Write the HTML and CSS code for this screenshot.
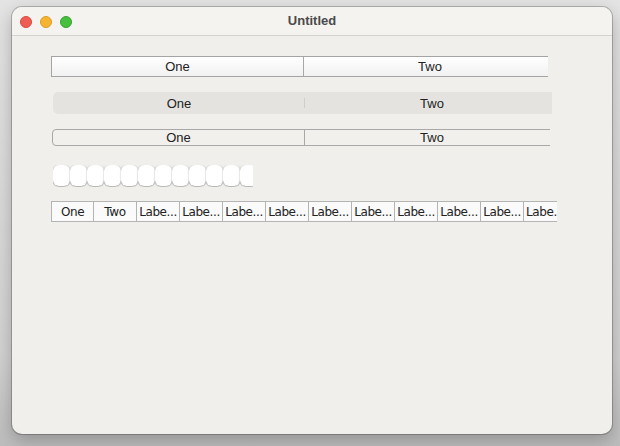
FILE: index.html
```html
<!DOCTYPE html>
<html>
<head>
<meta charset="utf-8">
<link rel="stylesheet" href="styles.css">
</head>
<body>
<div class="window">
  <div class="titlebar">
    <div class="lights">
      <span class="light red"></span>
      <span class="light yellow"></span>
      <span class="light green"></span>
    </div>
    <div class="title">Untitled</div>
  </div>
  <div class="content">
    <div class="clip clip1">
      <div class="seg seg1">
        <div class="cell">One</div>
        <div class="cell">Two</div>
      </div>
    </div>
    <div class="clip clip2">
      <div class="seg seg2">
        <div class="cell">One</div>
        <div class="cell">Two</div>
      </div>
    </div>
    <div class="clip clip3">
      <div class="seg seg3">
        <div class="cell">One</div>
        <div class="cell">Two</div>
      </div>
    </div>
    <div class="pills">
      <span class="pill"></span><span class="pill"></span><span class="pill"></span><span class="pill"></span>
      <span class="pill"></span><span class="pill"></span><span class="pill"></span><span class="pill"></span>
      <span class="pill"></span><span class="pill"></span><span class="pill"></span><span class="pill"></span>
    </div>
    <div class="tabs">
      <div class="tab">One</div>
      <div class="tab">Two</div>
      <div class="tab">Labe...</div>
      <div class="tab">Labe...</div>
      <div class="tab">Labe...</div>
      <div class="tab">Labe...</div>
      <div class="tab">Labe...</div>
      <div class="tab">Labe...</div>
      <div class="tab">Labe...</div>
      <div class="tab">Labe...</div>
      <div class="tab">Labe...</div>
      <div class="tab last">Labe.</div>
    </div>
  </div>
</div>
</body>
</html>
```

FILE: styles.css
```css
html, body {
  margin: 0;
  padding: 0;
}
body {
  width: 620px;
  height: 446px;
  overflow: hidden;
  background: linear-gradient(#e4e4e4, #d2d2d2 80%, #bdbdbd);
  font-family: "Liberation Sans", Arial, sans-serif;
  color: #222;
}
.window {
  margin: 7px 0 0 12px;
  width: 600px;
  height: 427px;
  border-radius: 10px;
  background: #f0efeb;
  box-shadow: 0 0 0 1px rgba(0,0,0,0.22), 0 6px 18px rgba(0,0,0,0.25);
  overflow: hidden;
}
.titlebar {
  height: 28px;
  background: #f4f3ef;
  border-bottom: 1px solid #d3d2ce;
  display: flex;
  align-items: center;
  position: relative;
}
.lights {
  display: flex;
  gap: 8px;
  padding-left: 8px;
  padding-top: 1px;
}
.light {
  width: 12px;
  height: 12px;
  border-radius: 50%;
  box-sizing: border-box;
}
.red { background: #ee5e55; border: 0.5px solid #d9493f; }
.yellow { background: #f5b431; border: 0.5px solid #dc9c25; }
.green { background: #47bf3f; border: 0.5px solid #35a42e; }
.title {
  position: absolute;
  left: 0;
  right: 0;
  top: 6px;
  text-align: center;
  font-weight: bold;
  font-size: 13px;
  color: #4a4a4a;
}
.content {
  padding: 20px 0 0 39px;
  display: flex;
  flex-direction: column;
  align-items: flex-start;
}
.clip {
  overflow: hidden;
}
.clip1 { width: 497px; }
.clip2 { width: 499px; margin-top: 15px; margin-left: 2px; }
.clip3 { width: 498px; margin-top: 15px; margin-left: 1px; }
.seg {
  display: flex;
  box-sizing: border-box;
  font-size: 13px;
}
.seg .cell {
  display: flex;
  align-items: center;
  justify-content: center;
}
.seg1 {
  width: 506px;
  height: 21px;
  border: 1px solid #a4a4a4;
  background: linear-gradient(#ffffff, #f1f1f1);
}
.seg1 .cell:first-child { border-right: 1px solid #a8a8a8; flex: 0 0 251px; }
.seg1 .cell:last-child { flex: 0 0 252px; }
.seg2 {
  width: 508px;
  height: 22px;
  border-radius: 5px;
  background: #e4e3df;
}
.seg2 .cell:first-child { flex: 0 0 252px; position: relative; }
.seg2 .cell:last-child { flex: 0 0 254px; }
.seg2 .cell:first-child::after {
  content: "";
  position: absolute;
  right: 0;
  top: 6px;
  bottom: 6px;
  width: 1px;
  background: #cfcecb;
}
.seg3 {
  width: 508px;
  height: 17px;
  border: 1px solid #a8a8a8;
  border-radius: 4px;
  background: #f1f0ec;
}
.seg3 .cell:first-child { border-right: 1px solid #a8a8a8; flex: 0 0 251px; }
.seg3 .cell:last-child { flex: 0 0 254px; }
.pills {
  margin-top: 19px;
  margin-left: 2px;
  width: 200px;
  height: 22px;
  display: flex;
  overflow: hidden;
}
.pill {
  flex: 0 0 17px;
  height: 21px;
  box-sizing: border-box;
  background: #fff;
  border-radius: 6px;
  box-shadow: 0 0.5px 1.5px rgba(0,0,0,0.45);
}
.tabs {
  margin-top: 14px;
  width: 506px;
  height: 21px;
  display: flex;
  overflow: hidden;
  box-sizing: border-box;
  border-top: 1px solid #b4b4b4;
  border-bottom: 1px solid #b4b4b4;
  border-left: 1px solid #b4b4b4;
  background: #fafafa;
  font-size: 12px;
  font-family: "DejaVu Sans", sans-serif;
}
.tab {
  flex: 0 0 43px;
  box-sizing: border-box;
  border-right: 1px solid #b4b4b4;
  display: flex;
  align-items: center;
  justify-content: center;
  white-space: nowrap;
  overflow: hidden;
  letter-spacing: -0.4px;
  color: #222;
}
.tab:first-child { flex-basis: 42px; }
.tab.last { border-right: none; justify-content: flex-start; padding-left: 2px; }
```
